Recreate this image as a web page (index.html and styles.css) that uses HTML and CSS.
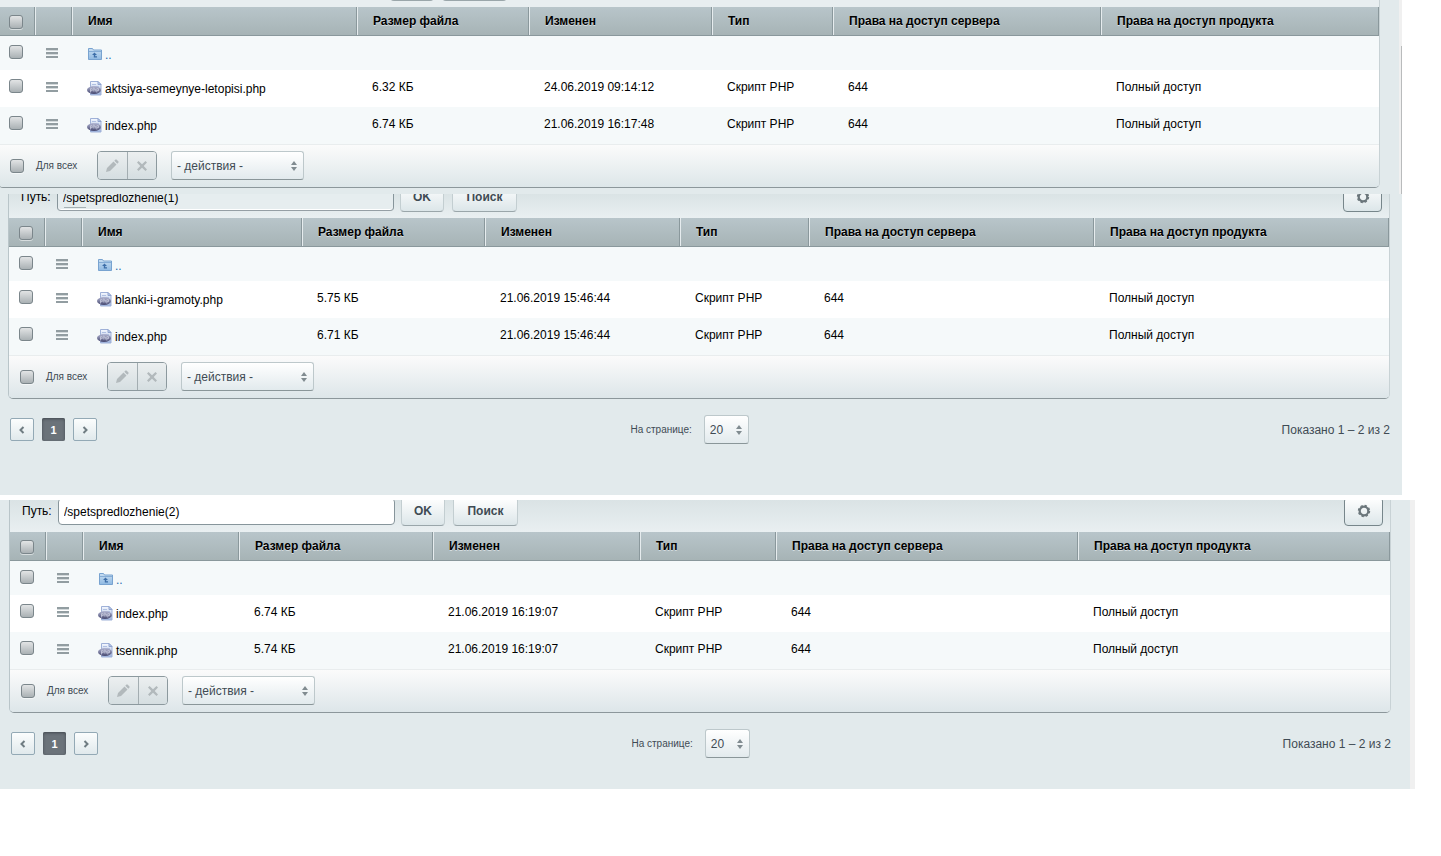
FILE: index.html
```
<!DOCTYPE html>
<html lang="ru">
<head>
<meta charset="utf-8">
<title>Файлы</title>
<link rel="stylesheet" href="styles.css">
</head>
<body>
<svg class="sprite" aria-hidden="true">
  <defs>
    <linearGradient id="folder-fill" x1="0" y1="0" x2="0" y2="1"><stop offset="0" stop-color="#c9dff2"/><stop offset="1" stop-color="#8fb9e2"/></linearGradient>
    <linearGradient id="page-fill" x1="0" y1="0" x2="0" y2="1"><stop offset="0" stop-color="#f6f9ff"/><stop offset="1" stop-color="#9db3dc"/></linearGradient>
    <linearGradient id="php-fill" x1="0" y1="0" x2="0" y2="1"><stop offset="0" stop-color="#b4b8d4"/><stop offset="1" stop-color="#45476f"/></linearGradient>
  </defs>
  <symbol id="i-up" viewBox="0 0 15 15">
    <path d="M1.500 12.500v-11h4l1 1.500h8v9.500z" fill="url(#folder-fill)" stroke="#78a3d0"/>
    <path d="M2 4.500h12" stroke="#86add6"/>
    <path d="M7.500 5.500 5 8h1.800v2.500H10v-1.200H8.200V8H10z" fill="#3d6ea8"/>
  </symbol>
  <symbol id="i-php" viewBox="0 0 15 15">
    <path d="M3.500.5h7.500l3 3v10.500H3.500z" fill="url(#page-fill)" stroke="#9fb1d8"/>
    <path d="M11 .5v3h3z" fill="#c6d4ee" stroke="#8fa3cf"/>
    <path d="M5 3.500h4M5 5.500h7" stroke="#b0c0e2"/>
    <ellipse cx="7" cy="9" rx="7" ry="4" fill="url(#php-fill)"/>
    <path d="M3.500 11.500V7.700h1.700v2H3.500M6.800 6.500v4M6.800 8h1.500v2.500M9.800 11.500V7.700h1.700v2H9.800" fill="none" stroke="#d5d8ea" stroke-width=".7"/>
  </symbol>
  <symbol id="i-pen" viewBox="0 0 14 14">
    <path d="M1 13l1-4 6.500-6.500 3 3L5 12zM9.300 1.700l1-1a1 1 0 0 1 1.400 0l1.600 1.600a1 1 0 0 1 0 1.400l-1 1z"/>
  </symbol>
  <symbol id="i-del" viewBox="0 0 14 14">
    <path d="M3.500 2 7 5.300 10.500 2 12 3.500 8.700 7l3.300 3.500-1.500 1.500L7 8.700 3.500 12 2 10.500 5.300 7 2 3.500z"/>
  </symbol>
  <symbol id="i-gear" viewBox="0 0 14 14">
    <circle cx="7" cy="7" r="4.300" fill="none" stroke="#6b767b" stroke-width="2.200"/>
    <circle cx="7" cy="7" r="5.500" fill="none" stroke="#6b767b" stroke-width="1.400" stroke-dasharray="2.320 2"/>
  </symbol>
  <symbol id="i-prev" viewBox="0 0 8 8"><path d="M5.500 1 2.500 4l3 3" fill="none" stroke="#6f7c82" stroke-width="2"/></symbol>
  <symbol id="i-next" viewBox="0 0 8 8"><path d="M2.500 1l3 3-3 3" fill="none" stroke="#6f7c82" stroke-width="2"/></symbol>
  <symbol id="i-sort" viewBox="0 0 6 10"><path d="M0 4 3 0l3 4zM0 6h6L3 10z" fill="#808b90"/></symbol>
</svg>

<section class="panel panel-a">
  <div class="grid">
    <div class="toolbar toolbar-peek">
      <button class="btn ok" aria-label="OK"></button>
      <button class="btn find" aria-label="Поиск"></button>
    </div>
    <table class="list">
      <colgroup><col class="c-check"><col class="c-menu"><col class="a-name"><col class="a-size"><col class="a-date"><col class="a-type"><col class="a-serv"><col></colgroup>
      <thead><tr><th><input type="checkbox" aria-label="Отметить все"></th><th></th><th>Имя</th><th>Размер файла</th><th>Изменен</th><th>Тип</th><th>Права на доступ сервера</th><th>Права на доступ продукта</th></tr></thead>
      <tbody>
        <tr class="up"><td><input type="checkbox" aria-label="Отметить"></td><td><button class="menu" aria-label="Меню"></button></td><td><a class="name parent" href="#"><svg><use href="#i-up"/></svg>..</a></td><td></td><td></td><td></td><td></td><td></td></tr>
        <tr><td><input type="checkbox" aria-label="Отметить"></td><td><button class="menu" aria-label="Меню"></button></td><td><a class="name" href="#"><svg><use href="#i-php"/></svg>aktsiya-semeynye-letopisi.php</a></td><td>6.32 КБ</td><td>24.06.2019 09:14:12</td><td>Скрипт PHP</td><td>644</td><td>Полный доступ</td></tr>
        <tr><td><input type="checkbox" aria-label="Отметить"></td><td><button class="menu" aria-label="Меню"></button></td><td><a class="name" href="#"><svg><use href="#i-php"/></svg>index.php</a></td><td>6.74 КБ</td><td>21.06.2019 16:17:48</td><td>Скрипт PHP</td><td>644</td><td>Полный доступ</td></tr>
      </tbody>
    </table>
    <div class="actions">
      <label class="all"><input type="checkbox">Для всех</label>
      <div class="pair"><button aria-label="Изменить"><svg><use href="#i-pen"/></svg></button><button aria-label="Удалить"><svg><use href="#i-del"/></svg></button></div>
      <div class="select"><select aria-label="Действия"><option>- действия -</option></select><svg><use href="#i-sort"/></svg></div>
    </div>
  </div>
</section>

<section class="panel panel-b">
  <div class="grid">
    <div class="toolbar toolbar-cut">
      <label for="path-b">Путь:</label>
      <input class="path" id="path-b" type="text" value="/spetspredlozhenie(1)">
      <button class="btn ok">OK</button>
      <button class="btn find">Поиск</button>
      <button class="btn gear" aria-label="Настройки"><svg><use href="#i-gear"/></svg></button>
    </div>
    <table class="list">
      <colgroup><col class="c-check"><col class="c-menu"><col class="b-name"><col class="b-size"><col class="b-date"><col class="b-type"><col class="b-serv"><col></colgroup>
      <thead><tr><th><input type="checkbox" aria-label="Отметить все"></th><th></th><th>Имя</th><th>Размер файла</th><th>Изменен</th><th>Тип</th><th>Права на доступ сервера</th><th>Права на доступ продукта</th></tr></thead>
      <tbody>
        <tr class="up"><td><input type="checkbox" aria-label="Отметить"></td><td><button class="menu" aria-label="Меню"></button></td><td><a class="name parent" href="#"><svg><use href="#i-up"/></svg>..</a></td><td></td><td></td><td></td><td></td><td></td></tr>
        <tr><td><input type="checkbox" aria-label="Отметить"></td><td><button class="menu" aria-label="Меню"></button></td><td><a class="name" href="#"><svg><use href="#i-php"/></svg>blanki-i-gramoty.php</a></td><td>5.75 КБ</td><td>21.06.2019 15:46:44</td><td>Скрипт PHP</td><td>644</td><td>Полный доступ</td></tr>
        <tr><td><input type="checkbox" aria-label="Отметить"></td><td><button class="menu" aria-label="Меню"></button></td><td><a class="name" href="#"><svg><use href="#i-php"/></svg>index.php</a></td><td>6.71 КБ</td><td>21.06.2019 15:46:44</td><td>Скрипт PHP</td><td>644</td><td>Полный доступ</td></tr>
      </tbody>
    </table>
    <div class="actions">
      <label class="all"><input type="checkbox">Для всех</label>
      <div class="pair"><button aria-label="Изменить"><svg><use href="#i-pen"/></svg></button><button aria-label="Удалить"><svg><use href="#i-del"/></svg></button></div>
      <div class="select"><select aria-label="Действия"><option>- действия -</option></select><svg><use href="#i-sort"/></svg></div>
    </div>
  </div>
  <div class="pager">
    <nav class="pages"><a class="arrow" href="#" aria-label="Назад"><svg><use href="#i-prev"/></svg></a><span class="current">1</span><a class="arrow" href="#" aria-label="Вперед"><svg><use href="#i-next"/></svg></a></nav>
    <div class="per"><label for="per-b">На странице:</label><div class="select small"><select id="per-b"><option>20</option></select><svg><use href="#i-sort"/></svg></div></div>
    <div class="shown">Показано 1 – 2 из 2</div>
  </div>
</section>

<section class="panel panel-c">
  <div class="grid">
    <div class="toolbar">
      <label for="path-c">Путь:</label>
      <input class="path" id="path-c" type="text" value="/spetspredlozhenie(2)">
      <button class="btn ok">OK</button>
      <button class="btn find">Поиск</button>
      <button class="btn gear" aria-label="Настройки"><svg><use href="#i-gear"/></svg></button>
    </div>
    <table class="list">
      <colgroup><col class="c-check"><col class="c-menu"><col class="d-name"><col class="d-size"><col class="d-date"><col class="d-type"><col class="d-serv"><col></colgroup>
      <thead><tr><th><input type="checkbox" aria-label="Отметить все"></th><th></th><th>Имя</th><th>Размер файла</th><th>Изменен</th><th>Тип</th><th>Права на доступ сервера</th><th>Права на доступ продукта</th></tr></thead>
      <tbody>
        <tr class="up"><td><input type="checkbox" aria-label="Отметить"></td><td><button class="menu" aria-label="Меню"></button></td><td><a class="name parent" href="#"><svg><use href="#i-up"/></svg>..</a></td><td></td><td></td><td></td><td></td><td></td></tr>
        <tr><td><input type="checkbox" aria-label="Отметить"></td><td><button class="menu" aria-label="Меню"></button></td><td><a class="name" href="#"><svg><use href="#i-php"/></svg>index.php</a></td><td>6.74 КБ</td><td>21.06.2019 16:19:07</td><td>Скрипт PHP</td><td>644</td><td>Полный доступ</td></tr>
        <tr><td><input type="checkbox" aria-label="Отметить"></td><td><button class="menu" aria-label="Меню"></button></td><td><a class="name" href="#"><svg><use href="#i-php"/></svg>tsennik.php</a></td><td>5.74 КБ</td><td>21.06.2019 16:19:07</td><td>Скрипт PHP</td><td>644</td><td>Полный доступ</td></tr>
      </tbody>
    </table>
    <div class="actions">
      <label class="all"><input type="checkbox">Для всех</label>
      <div class="pair"><button aria-label="Изменить"><svg><use href="#i-pen"/></svg></button><button aria-label="Удалить"><svg><use href="#i-del"/></svg></button></div>
      <div class="select"><select aria-label="Действия"><option>- действия -</option></select><svg><use href="#i-sort"/></svg></div>
    </div>
  </div>
  <div class="pager">
    <nav class="pages"><a class="arrow" href="#" aria-label="Назад"><svg><use href="#i-prev"/></svg></a><span class="current">1</span><a class="arrow" href="#" aria-label="Вперед"><svg><use href="#i-next"/></svg></a></nav>
    <div class="per"><label for="per-c">На странице:</label><div class="select small"><select id="per-c"><option>20</option></select><svg><use href="#i-sort"/></svg></div></div>
    <div class="shown">Показано 1 – 2 из 2</div>
  </div>
</section>
</body>
</html>
```
FILE: styles.css
```
* { box-sizing: border-box; }
body {
  margin: 0;
  background: #fff;
  color: #000;
  font: 12px/14px "Liberation Sans", Arial, sans-serif;
}
button, input, select { font: inherit; margin: 0; }
.sprite { position: absolute; width: 0; height: 0; }

/* panels */
.panel { background: #e2eaec; overflow: hidden; }
.panel-a {
  margin-right: 39px;
  padding: 0 22px 6px 0;
  background:
    linear-gradient(#f0f0f0 46px, #b9bbbc 46px) right / 1px 100% no-repeat,
    linear-gradient(#f0f0f0, #f0f0f0) right / 3px 100% no-repeat,
    #e2eaec;
}
.panel-b { margin-right: 39px; padding: 0 12px 51px 8px; }
.panel-c { margin: 5px 26px 0 0; padding: 0 19px 31px 9px; border-right: 5px solid #f0f0f0; }
.grid {
  border: 1px solid #b9c5c9;
  border-top: 0;
  border-right-color: #c8d2d5;
  border-bottom-color: #8c979b;
  border-radius: 0 0 5px 5px;
  overflow: hidden;
}
.panel-a .grid { margin-left: -2px; }

/* toolbar */
.toolbar {
  display: flex;
  align-items: flex-end;
  height: 32px;
  padding: 0 7px 6px 12px;
  overflow: hidden;
  background: linear-gradient(#dae3e5, #e9eff1);
}
.toolbar-cut { height: 24px; }
.toolbar-peek { height: 7px; padding-left: 391px; background: #e8eef0; }
.toolbar label { padding-bottom: 7px; line-height: 16px; width: 36px; }
.path {
  width: 337px;
  height: 27px;
  margin: 0 6px 1px 0;
  padding: 0 5px;
  border: 1px solid #87959b;
  border-radius: 4px;
  background: #fff;
}
.toolbar-cut .path { background: linear-gradient(#a5b0b4, #a5b0b4) 6px 22px / 22px 1px no-repeat, #e6edef; border-bottom-color: #959fa5; box-shadow: inset 0 -1px #fff; }
.btn {
  flex: none;
  height: 29px;
  padding: 0 0 2px;
  border: 1px solid #c3ced1;
  border-bottom-color: #9aa6aa;
  border-radius: 4px;
  background: linear-gradient(#fff, #dce6e9);
  color: #3f4b54;
  font-weight: bold;
}
.ok { width: 44px; margin-right: 8px; }
.find { width: 65px; }
.gear { width: 39px; margin-left: auto; border-color: #77868b; display: grid; place-items: center; }
.gear svg { width: 14px; height: 14px; }

/* file table */
.list { width: 100%; table-layout: fixed; border-collapse: collapse; }
.c-check { width: 36px; }
.c-menu { width: 37px; }
.a-name { width: 285px; } .a-size { width: 172px; } .a-date { width: 183px; } .a-type { width: 121px; } .a-serv { width: 268px; }
.b-name { width: 220px; } .b-size { width: 183px; } .b-date { width: 195px; } .b-type { width: 129px; } .b-serv { width: 285px; }
.d-name { width: 156px; } .d-size { width: 194px; } .d-date { width: 207px; } .d-type { width: 136px; } .d-serv { width: 302px; }
th {
  height: 29px;
  padding: 0 0 2px 16px;
  text-align: left;
  background: linear-gradient(#b8c5ca, #a6b3b5);
  box-shadow: inset -1px -1px #8a989c, inset 1px 0 #e6ecee;
  text-shadow: 0 1px #d5dde0;
  white-space: nowrap;
}
th:first-child { padding: 1px 0 0 10px; box-shadow: inset -1px -1px #8a989c; }
td { height: 37px; padding: 10px 0 0 15px; vertical-align: top; white-space: nowrap; }
td:first-child { padding: 9px 0 0 10px; }
td:nth-child(2) { padding: 12px 0 0 11px; }
.up td { height: 34px; }
tbody tr { background: #fff; }
tbody tr:nth-child(odd) { background: #f5f9fa; }
input[type="checkbox"] {
  appearance: none;
  display: block;
  width: 14px;
  height: 14px;
  border: 1px solid #7b868b;
  border-radius: 3px;
  background: linear-gradient(#e2e4e5, #aab1b4);
  box-shadow: 0 1px #fff8;
}
.menu {
  display: block;
  width: 12px;
  height: 10px;
  padding: 0;
  border: 0;
  background: repeating-linear-gradient(#929da1 0 2px, #d3d9db 2px 3px, transparent 3px 4px);
}
.name { display: flex; align-items: center; gap: 3px; height: 17px; color: #000; text-decoration: none; }
.name svg { width: 15px; height: 15px; }
.parent { color: #2a6ab0; }
.list td:nth-child(3) { padding-left: 15px; }

/* group actions */
.actions {
  display: flex;
  align-items: center;
  height: 43px;
  padding: 0 11px 1px;
  border-top: 1px solid #e9edee;
  background: linear-gradient(#fbfbfb, #dde6e9);
}
.all { display: flex; align-items: center; gap: 12px; width: 87px; font-size: 10px; color: #3f4b54; white-space: nowrap; }
.pair { display: flex; width: 60px; height: 29px; border: 1px solid #8c999e; border-radius: 4px; margin-right: 14px; overflow: hidden; }
.pair button {
  flex: 1;
  display: grid;
  place-items: center;
  padding: 0;
  border: 0;
  background: linear-gradient(#eceff0, #d5dee1);
  fill: #b2b9bc;
}
.pair button + button { border-left: 1px solid #a3adb1; }
.pair svg { width: 14px; height: 14px; }
.select { position: relative; width: 133px; height: 29px; }
.select select {
  appearance: none;
  width: 100%;
  height: 100%;
  padding: 0 5px;
  border: 1px solid #bdc8cb;
  border-bottom-color: #8a9699;
  border-radius: 3px;
  background: linear-gradient(#fff, #e2eaed);
  color: #3f4b54;
}
.select svg { position: absolute; right: 7px; top: 10px; width: 6px; height: 10px; pointer-events: none; }
.select.small { width: 45px; }

/* pager */
.pager { display: grid; grid-template-columns: 45% 1fr auto; align-items: center; margin-top: 16px; padding-left: 1px; color: #3f4b54; }
.pages { display: flex; gap: 8px; padding-left: 1px; }
.arrow, .current { display: grid; place-items: center; width: 24px; height: 23px; border-radius: 2px; }
.arrow { border: 1px solid #93a9b5; background: linear-gradient(#fbfdfd, #e0e9ec); }
.arrow svg { width: 8px; height: 8px; }
.current { width: 23px; background: #6b737a; box-shadow: inset 0 1px 3px #42494f; color: #fff; font-size: 11px; font-weight: bold; }
.per { display: flex; align-items: center; gap: 12px; font-size: 10px; }
.per select { font-size: 12px; }
```
